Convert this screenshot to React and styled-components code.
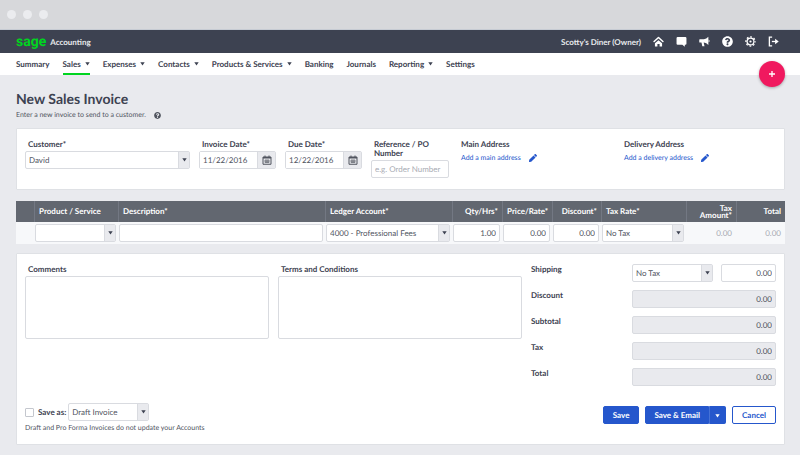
import styled, { createGlobalStyle } from 'styled-components'
import { FaQuestionCircle, FaPen } from 'react-icons/fa'

const navItems = [
  { label: 'Summary' },
  { label: 'Sales', menu: true, active: true },
  { label: 'Expenses', menu: true },
  { label: 'Contacts', menu: true },
  { label: 'Products & Services', menu: true },
  { label: 'Banking' },
  { label: 'Journals' },
  { label: 'Reporting', menu: true },
  { label: 'Settings' },
]

const totals = ['Discount', 'Subtotal', 'Tax', 'Total']

const HomeIcon = () => (
  <svg viewBox="0 0 20 20" fill="none">
    <path d="M2 10 L10 2.800 L18 10" stroke="currentColor" strokeWidth="2.800" strokeLinecap="round" strokeLinejoin="round" />
    <path d="M10 7.500 L16.500 13 V19 H12 V14.500 H8 V19 H3.500 V13 Z" fill="currentColor" />
  </svg>
)

const MessageIcon = () => (
  <svg viewBox="0 0 20 20" fill="currentColor">
    <path d="M3 2 H17 Q19 2 19 4 V14 Q19 16 17 16 H16 V19.500 L11.500 16 H3 Q1 16 1 14 V4 Q1 2 3 2 Z" />
  </svg>
)

const MegaphoneIcon = () => (
  <svg viewBox="0 0 20 20" fill="currentColor">
    <path d="M1.500 6 H9 Q13.500 5.500 17 1.500 V16.500 Q13.500 12.500 9 12 H8.500 L10 18.500 H6 L4.500 12 H1.500 Q0.500 12 0.500 11 V7 Q0.500 6 1.500 6 Z" />
    <path d="M17.500 6.500 Q21 9 17.500 11.500 Z" />
  </svg>
)

const GearIcon = () => (
  <svg viewBox="0 0 20 20" fill="none" stroke="currentColor">
    <circle cx="10" cy="10" r="8.300" strokeWidth="2.400" strokeDasharray="3.260 3.260" strokeDashoffset="1.630" />
    <circle cx="10" cy="10" r="6.200" strokeWidth="2.200" />
    <circle cx="10" cy="10" r="2" fill="currentColor" stroke="none" />
  </svg>
)

const SignOutIcon = () => (
  <svg viewBox="0 0 20 20" fill="none" stroke="currentColor" strokeWidth="2.400">
    <path d="M7.500 2.200 H2.500 V17.800 H7.500" />
    <path d="M7 10 H15" />
    <path d="M13 5 L19.500 10 L13 15 Z" fill="currentColor" stroke="none" />
  </svg>
)

const CalendarIcon = () => (
  <svg viewBox="0 0 20 20" fill="none" stroke="currentColor" strokeWidth="2">
    <path d="M2 4 H18 V18.500 H2 Z" />
    <path d="M2 5.500 H18" strokeWidth="3" />
    <path d="M6 1 V4 M14 1 V4" />
    <path d="M6 10 H14 V15 H6 Z M10 10 V15 M6 12.500 H14" strokeWidth="1.300" />
  </svg>
)

const Caret = () => (
  <svg width="5" height="4" viewBox="0 0 5 4" fill="currentColor" aria-hidden="true">
    <path d="M0.300 0.300 H4.700 L2.500 3.500 Z" />
  </svg>
)

const Select = ({ children, ...rest }) => (
  <SelectBox>
    <select {...rest}>{children}</select>
    <span><Caret /></span>
  </SelectBox>
)

const DateInput = ({ id, value }) => (
  <DateBox>
    <input id={id} type="text" defaultValue={value} />
    <button type="button" aria-label="Open calendar"><CalendarIcon /></button>
  </DateBox>
)

const App = () => {
  return (
    <Page>
      <GlobalStyle />
      <WindowBar><i /><i /><i /></WindowBar>

      <Header>
        <Logo href="#">sage</Logo>
        <Product>Accounting</Product>
        <Owner>Scotty's Diner (Owner)</Owner>
        <HeaderIcons>
          <button type="button" aria-label="Home"><HomeIcon /></button>
          <button type="button" aria-label="Messages"><MessageIcon /></button>
          <button type="button" aria-label="News"><MegaphoneIcon /></button>
          <button type="button" aria-label="Help"><FaQuestionCircle /></button>
          <button type="button" aria-label="Preferences"><GearIcon /></button>
          <button type="button" aria-label="Sign out"><SignOutIcon /></button>
        </HeaderIcons>
      </Header>

      <Nav>
        {navItems.map((item) => (
          <NavLink key={item.label} href="#" $active={item.active}>
            {item.label}
            {item.menu && <Caret />}
          </NavLink>
        ))}
        <AddButton type="button" aria-label="Add">
          <svg width="8" height="8" viewBox="0 0 8 8" stroke="currentColor" strokeWidth="1.300">
            <path d="M4 1 V7 M1 4 H7" />
          </svg>
        </AddButton>
      </Nav>

      <Content>
        <Title>New Sales Invoice</Title>
        <Intro>Enter a new invoice to send to a customer. <FaQuestionCircle /></Intro>

        <DetailsCard>
          <Field>
            <label htmlFor="customer">Customer*</label>
            <Select id="customer"><option>David</option></Select>
          </Field>
          <Field>
            <label htmlFor="invoice-date">Invoice Date*</label>
            <DateInput id="invoice-date" value="11/22/2016" />
          </Field>
          <Field>
            <label htmlFor="due-date">Due Date*</label>
            <DateInput id="due-date" value="12/22/2016" />
          </Field>
          <Field>
            <label htmlFor="reference">Reference / PO Number</label>
            <Input id="reference" type="text" placeholder="e.g. Order Number" />
          </Field>
          <Address>
            <h2>Main Address</h2>
            <a href="#">Add a main address <FaPen /></a>
          </Address>
          <Address>
            <h2>Delivery Address</h2>
            <a href="#">Add a delivery address <FaPen /></a>
          </Address>
        </DetailsCard>

        <LineTable>
          <colgroup>
            <Col $width={18} />
            <Col $width={84} />
            <Col />
            <Col $width={127} />
            <Col $width={50} />
            <Col $width={50} />
            <Col $width={49} />
            <Col $width={85} />
            <Col $width={50} />
            <Col $width={49} />
          </colgroup>
          <thead>
            <tr>
              <Th />
              <Th>Product / Service</Th>
              <Th>Description*</Th>
              <Th>Ledger Account*</Th>
              <Th $right>Qty/Hrs*</Th>
              <Th $right>Price/Rate*</Th>
              <Th $right>Discount*</Th>
              <Th>Tax Rate*</Th>
              <Th $right>Tax Amount*</Th>
              <Th $right>Total</Th>
            </tr>
          </thead>
          <tbody>
            <tr>
              <Td />
              <Td><Select aria-label="Product / Service"><option></option></Select></Td>
              <Td><Input aria-label="Description" type="text" /></Td>
              <Td><Select aria-label="Ledger Account"><option>4000 - Professional Fees</option></Select></Td>
              <Td><Input aria-label="Quantity" type="text" defaultValue="1.00" $right /></Td>
              <Td><Input aria-label="Price" type="text" defaultValue="0.00" $right /></Td>
              <Td><Input aria-label="Discount" type="text" defaultValue="0.00" $right /></Td>
              <Td><Select aria-label="Tax Rate"><option>No Tax</option></Select></Td>
              <Td $readOnly>0.00</Td>
              <Td $readOnly>0.00</Td>
            </tr>
          </tbody>
        </LineTable>

        <SummaryCard>
          <SummaryGrid>
            <Field>
              <label htmlFor="comments">Comments</label>
              <TextArea id="comments" />
            </Field>
            <Field>
              <label htmlFor="terms">Terms and Conditions</label>
              <TextArea id="terms" />
            </Field>
            <Totals>
              <TotalRow>
                <label htmlFor="shipping">Shipping</label>
                <ShippingInputs>
                  <Select aria-label="Shipping tax"><option>No Tax</option></Select>
                  <Input id="shipping" type="text" defaultValue="0.00" $right />
                </ShippingInputs>
              </TotalRow>
              {totals.map((name) => (
                <TotalRow key={name}>
                  <label htmlFor={name}>{name}</label>
                  <Input id={name} type="text" value="0.00" readOnly $right $locked />
                </TotalRow>
              ))}
            </Totals>
          </SummaryGrid>

          <Footer>
            <div>
              <SaveAs>
                <input id="save-as" type="checkbox" />
                <label htmlFor="save-as">Save as:</label>
                <Select aria-label="Invoice type"><option>Draft Invoice</option></Select>
              </SaveAs>
              <Note>Draft and Pro Forma Invoices do not update your Accounts</Note>
            </div>
            <Actions>
              <Button type="button">Save</Button>
              <SplitButton>
                <Button type="button">Save &amp; Email</Button>
                <Button type="button" aria-label="More save options"><Caret /></Button>
              </SplitButton>
              <Button type="button" $outline>Cancel</Button>
            </Actions>
          </Footer>
        </SummaryCard>
      </Content>
    </Page>
  )
}

// Styles

const GlobalStyle = createGlobalStyle`
  * {
    box-sizing: border-box;
    margin: 0;
    padding: 0;
  }

  body {
    background: #e9eaee;
  }

  body, button, input, select, textarea {
    font-family: Lato, sans-serif;
    font-size: 8px;
    line-height: 10px;
    color: #51555f;
    text-rendering: geometricPrecision;
  }

  button {
    border: none;
    background: none;
  }

  a {
    text-decoration: none;
  }
`

const Page = styled.div`
  min-height: 100vh;
  background: #e9eaee;
`

const WindowBar = styled.div`
  display: flex;
  align-items: center;
  gap: 7px;
  height: 30px;
  padding: 0 7px;
  background: #d7d8db;
  border-bottom: 1px solid #c6cbd3;

  i {
    width: 9px;
    height: 9px;
    border-radius: 50%;
    background: #ebecef;
  }
`

const Header = styled.header`
  display: flex;
  align-items: center;
  height: 23px;
  padding: 0 21px 0 16px;
  background: #3d4251;
  color: #e8eaed;
  font-weight: 700;
`

const Logo = styled.a`
  font-family: Roboto, sans-serif;
  font-size: 14px;
  line-height: 16px;
  font-weight: 700;
  color: #00d420;
`

const Product = styled.span`
  margin-left: 4px;
`

const Owner = styled.span`
  margin-left: auto;
`

const HeaderIcons = styled.div`
  display: flex;
  gap: 12px;
  margin-left: 12px;

  button {
    display: flex;
    color: white;
  }

  svg {
    width: 11px;
    height: 11px;
  }
`

const Nav = styled.nav`
  position: relative;
  display: flex;
  gap: 13px;
  height: 22px;
  padding: 0 16px;
  background: white;
`

const NavLink = styled.a`
  display: flex;
  align-items: center;
  gap: 4px;
  font-weight: 700;
  color: #3d4251;
  border-top: 2px solid transparent;
  border-bottom: 2px solid ${({ $active }) => ($active ? '#00d420' : 'transparent')};
`

const AddButton = styled.button`
  position: absolute;
  right: 15px;
  top: 8px;
  display: flex;
  align-items: center;
  justify-content: center;
  width: 26px;
  height: 26px;
  border-radius: 50%;
  background: #f0195f;
  color: white;
  box-shadow: 0 1px 3px rgba(0, 0, 0, 30%);
`

const Content = styled.main`
  padding: 16px 15px 10px 16px;
`

const Title = styled.h1`
  font-size: 14px;
  line-height: 16px;
  font-weight: 700;
  color: #3d4251;
`

const Intro = styled.p`
  display: flex;
  align-items: center;
  gap: 8px;
  margin-top: 3px;
  font-size: 7px;

  svg {
    width: 7px;
    height: 7px;
  }
`

const Card = styled.section`
  background: white;
  border: 1px solid #dfe1e5;
  border-radius: 1px;
`

const DetailsCard = styled(Card)`
  display: grid;
  grid-template-columns: 165fr 77fr 77fr 78fr 154fr 155fr;
  column-gap: 9px;
  min-height: 62px;
  margin-top: 8px;
  padding: 11px 8px;
`

const Field = styled.div`
  display: flex;
  flex-direction: column;
  min-width: 0;

  label {
    padding: 0 3px;
    margin-bottom: 2px;
    font-weight: 700;
    line-height: 9px;
    color: #3d4251;
  }
`

const Input = styled.input`
  display: block;
  width: 100%;
  min-width: 0;
  height: 18px;
  padding: 0 3px;
  border: 1px solid #d9dbe0;
  border-radius: 2px;
  background: ${({ $locked }) => ($locked ? '#e9eaee' : 'white')};
  text-align: ${({ $right }) => ($right ? 'right' : 'left')};
  outline: none;

  &::placeholder {
    color: #a9acb4;
  }
`

const SelectBox = styled.div`
  display: grid;
  height: 18px;
  min-width: 0;
  border: 1px solid #d9dbe0;
  border-radius: 2px;
  background: white;

  select, span {
    grid-area: 1 / 1;
  }

  select {
    width: 100%;
    min-width: 0;
    padding: 0 14px 0 3px;
    appearance: none;
    border: none;
    background: none;
    outline: none;
  }

  span {
    display: flex;
    align-items: center;
    justify-content: center;
    justify-self: end;
    width: 11px;
    background: #e9eaee;
    border-left: 1px solid #d9dbe0;
    color: #3d4251;
    pointer-events: none;
  }
`

const DateBox = styled.div`
  display: flex;
  height: 18px;
  border: 1px solid #d9dbe0;
  border-radius: 2px;
  background: white;

  input {
    flex: 1;
    min-width: 0;
    padding: 0 3px;
    border: none;
    outline: none;
  }

  button {
    display: flex;
    align-items: center;
    justify-content: center;
    width: 18px;
    background: #e9eaee;
    border-left: 1px solid #d9dbe0;
  }

  svg {
    width: 10px;
    height: 10px;
  }
`

const Address = styled.div`
  padding-left: 3px;

  h2 {
    margin-bottom: 4px;
    font-size: 8px;
    font-weight: 700;
    line-height: 9px;
    color: #3d4251;
  }

  a {
    display: flex;
    align-items: center;
    gap: 8px;
    font-size: 7px;
    color: #2557cc;
  }

  svg {
    width: 8px;
    height: 8px;
  }
`

const LineTable = styled.table`
  width: 100%;
  margin: 11px 0 9px;
  table-layout: fixed;
  border-spacing: 0;
  background: #f7f8fa;
`

const Col = styled.col`
  width: ${({ $width }) => ($width ? `${$width}px` : 'auto')};
`

const Th = styled.th`
  height: 21px;
  padding: 0 4px;
  background: #626770;
  font-weight: 700;
  line-height: 7px;
  text-align: ${({ $right }) => ($right ? 'right' : 'left')};
  color: white;

  & + & {
    border-left: 1px solid #737883;
  }
`

const Td = styled.td`
  height: 22px;
  padding: ${({ $readOnly }) => ($readOnly ? '2px 4px' : '2px 2px 2px 1px')};
  text-align: right;
  color: #a9acb4;
`

const SummaryCard = styled(Card)`
  padding: 10px 8px 11px;
`

const SummaryGrid = styled.div`
  display: grid;
  grid-template-columns: 244fr 244fr 245fr;
  column-gap: 9px;

  > ${Field} {
    padding-top: 1px;
  }
`

const TextArea = styled.textarea`
  height: 63px;
  padding: 3px;
  border: 1px solid #d9dbe0;
  border-radius: 2px;
  resize: none;
  outline: none;
`

const Totals = styled.div`
  display: flex;
  flex-direction: column;
  gap: 8px;
`

const TotalRow = styled.div`
  display: grid;
  grid-template-columns: 101fr 144fr;

  label {
    font-weight: 700;
    color: #3d4251;
  }
`

const ShippingInputs = styled.div`
  display: grid;
  grid-template-columns: 81fr 55fr;
  column-gap: 8px;
`

const Footer = styled.div`
  display: flex;
  justify-content: space-between;
  margin-top: 17px;
`

const SaveAs = styled.div`
  display: flex;
  align-items: center;

  input {
    width: 9px;
    height: 9px;
    appearance: none;
    border: 1px solid #c4c7ce;
    border-radius: 1px;
  }

  label {
    margin: 0 2px 0 4px;
    font-weight: 700;
    color: #3d4251;
  }

  ${SelectBox} {
    width: 81px;
  }
`

const Note = styled.p`
  margin-top: 2px;
  font-size: 7px;
`

const Actions = styled.div`
  display: flex;
  gap: 6px;
  margin-top: 3px;
`

const Button = styled.button`
  height: 18px;
  padding: 0 9px;
  border: 1px solid #2557cc;
  border-radius: 2px;
  background: ${({ $outline }) => ($outline ? 'white' : '#2557cc')};
  color: ${({ $outline }) => ($outline ? '#2557cc' : 'white')};
  font-weight: 700;
`

const SplitButton = styled.div`
  display: flex;

  ${Button}:first-child {
    padding: 0 8px;
    border-radius: 2px 0 0 2px;
  }

  ${Button}:last-child {
    padding: 0 5px;
    border-radius: 0 2px 2px 0;
    border-left-color: #4672d6;
  }
`

export default App
